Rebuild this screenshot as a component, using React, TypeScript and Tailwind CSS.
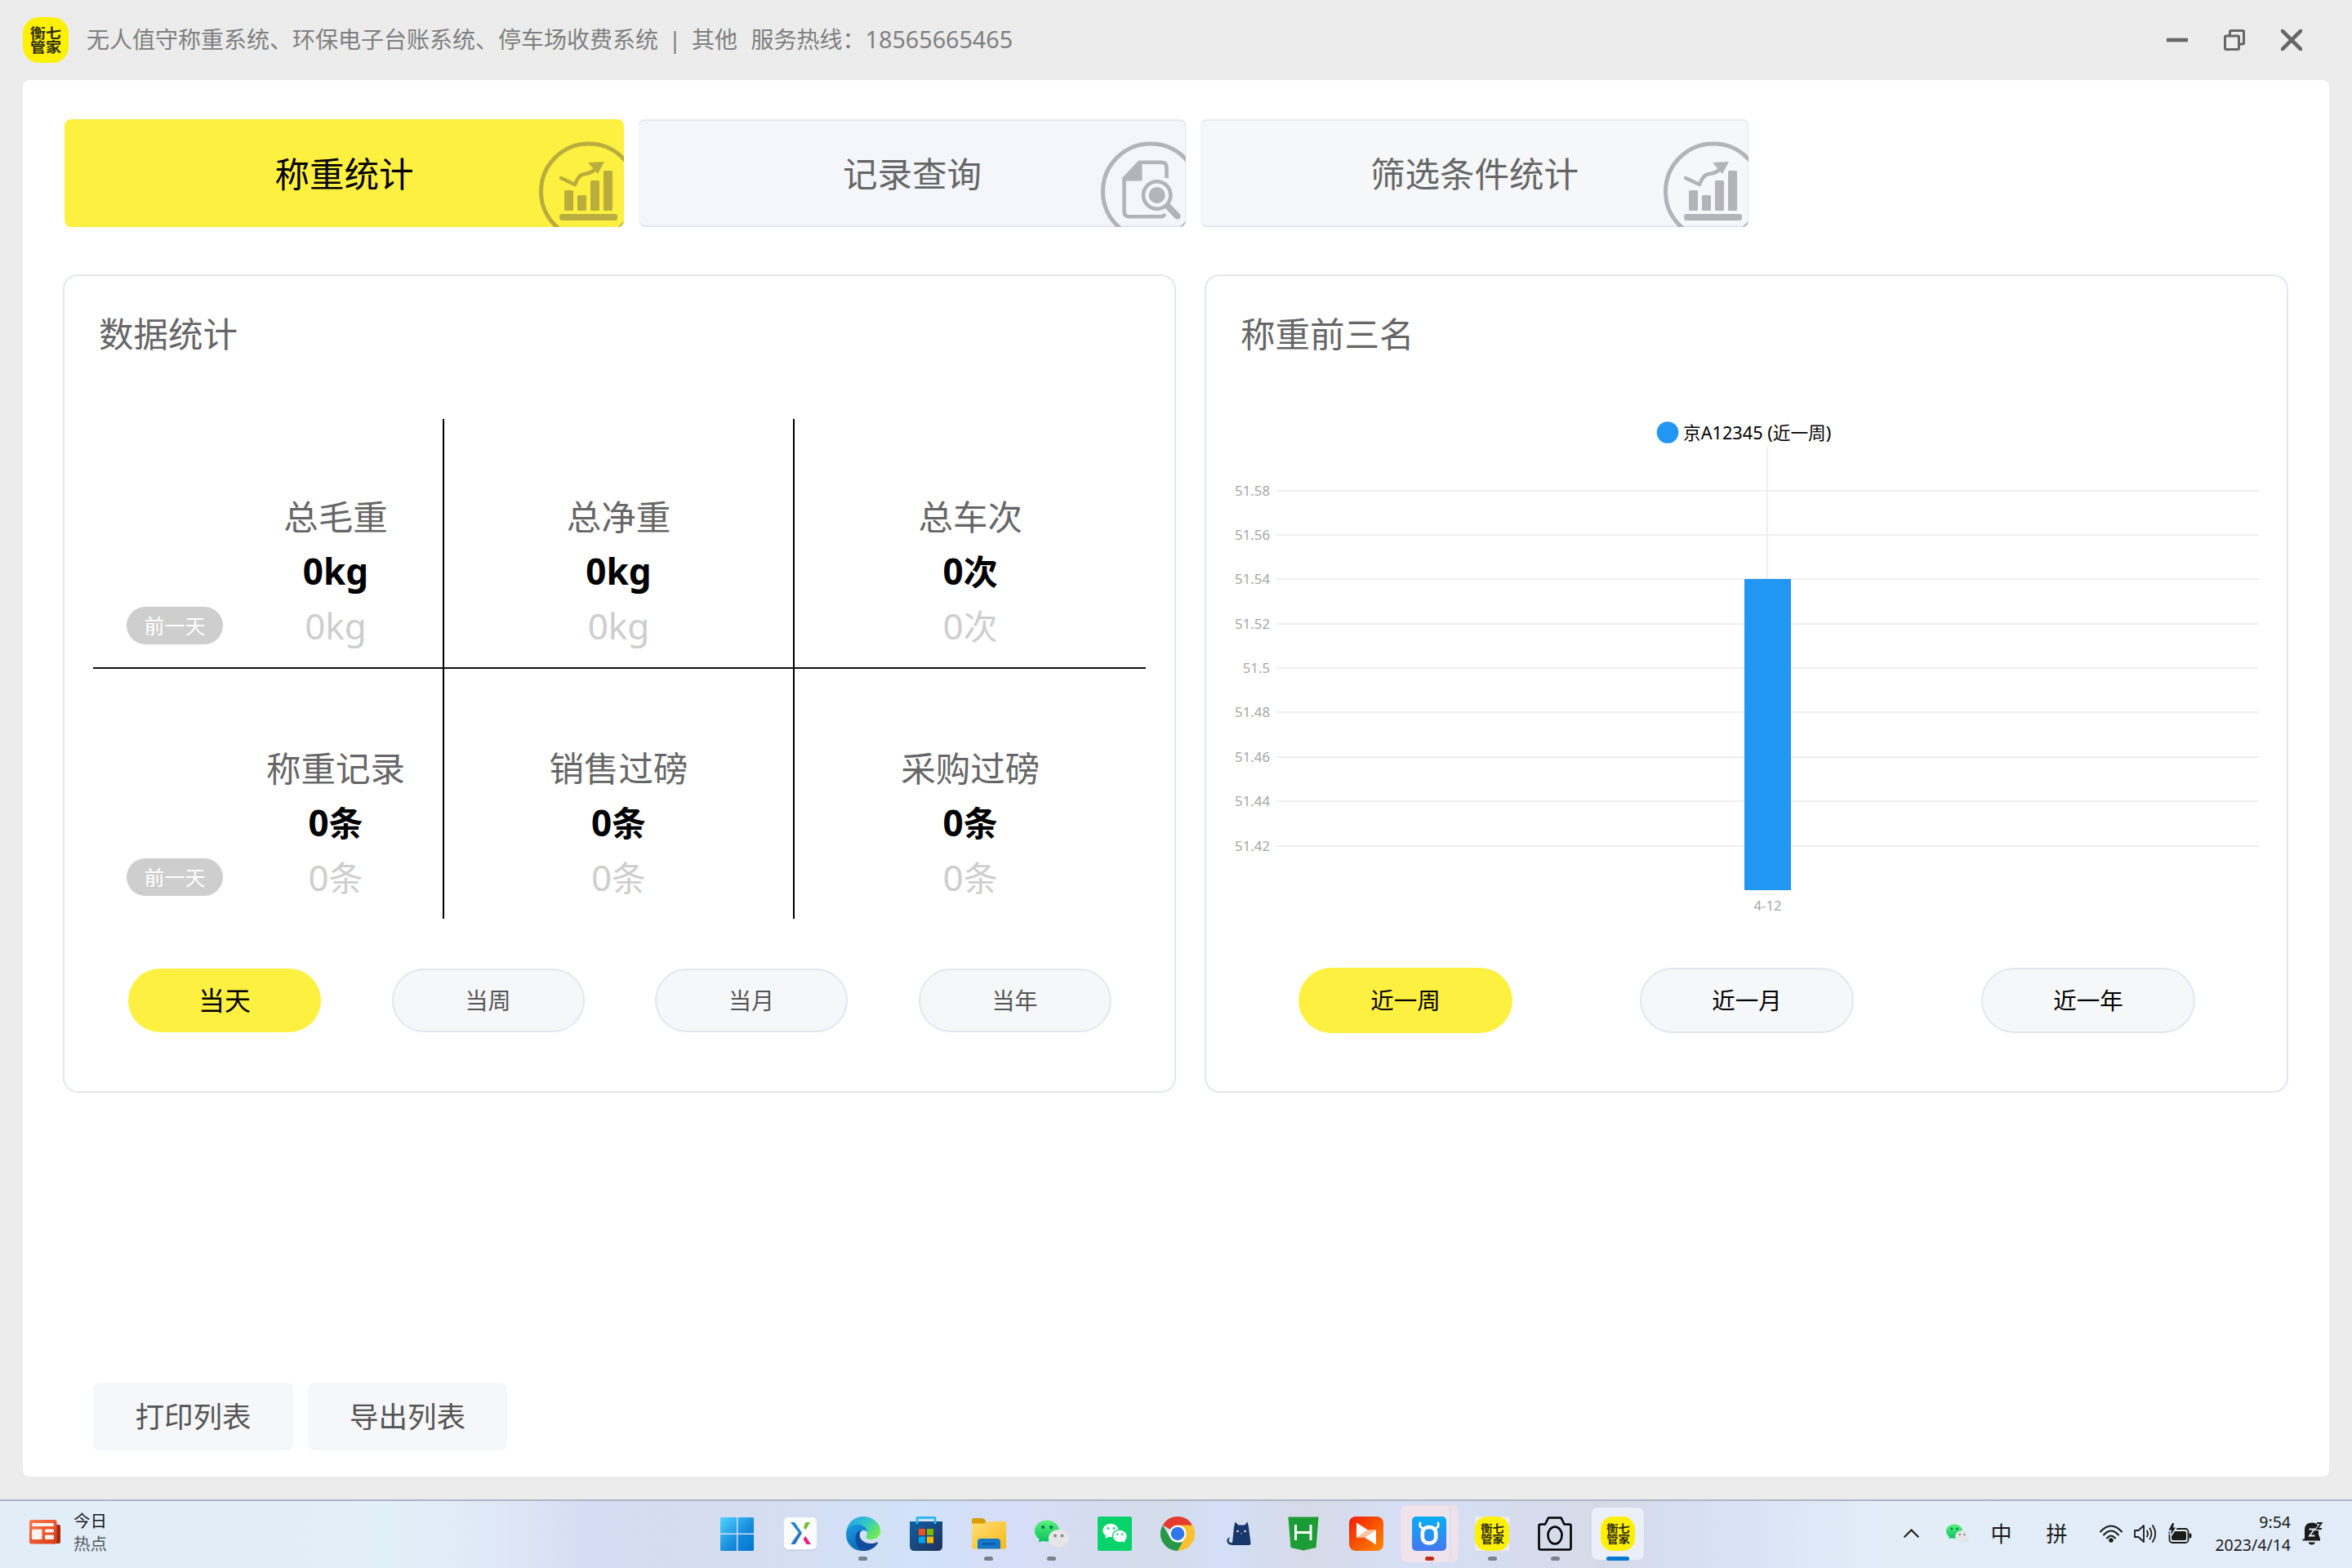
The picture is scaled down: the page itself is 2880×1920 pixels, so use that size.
import React from "react";

const FONT = "font-['Noto_Sans','Noto_Sans_CJK_SC',sans-serif]";

function ChartBadge({ color }: { color: string }) {
  return (
    <svg className="absolute right-0 bottom-0" width="104" height="106" viewBox="0 0 104 106" fill="none">
      <circle cx="61" cy="62.5" r="58.5" stroke={color} strokeWidth="5" />
      <rect x="25" y="90" width="71" height="8" rx="3" fill={color} />
      <rect x="31" y="61" width="11" height="25" rx="1.5" fill={color} />
      <rect x="47" y="67" width="11" height="19" rx="1.5" fill={color} />
      <rect x="63" y="49" width="11" height="37" rx="1.5" fill={color} />
      <rect x="79" y="37" width="11" height="49" rx="1.5" fill={color} />
      <path d="M27 46 L44 54 Q49 41 56 41 Q66 40 73 31" stroke={color} strokeWidth="4.500" strokeLinecap="round" strokeLinejoin="round" />
      <path d="M60 27 L80 26 L72 41 Z" fill={color} />
    </svg>
  );
}

function SearchBadge({ color }: { color: string }) {
  return (
    <svg className="absolute right-0 bottom-0" width="104" height="106" viewBox="0 0 104 106" fill="none">
      <circle cx="61" cy="62.5" r="58.5" stroke={color} strokeWidth="5" />
      <path d="M80.500 46 V33 Q80.500 26.700 74 26.700 H47.500 L28.500 46.500 V87 Q28.500 93.300 35 93.300 H74 Q77 93 78.500 90" stroke={color} strokeWidth="4.600" strokeLinejoin="round" />
      <path d="M28.500 48 L49 26.700 V48 Z" fill={color} stroke={color} strokeWidth="3" strokeLinejoin="round" />
      <circle cx="68.700" cy="67" r="16.700" stroke={color} strokeWidth="4.500" />
      <circle cx="68.700" cy="67" r="10" fill={color} />
      <path d="M82 80.500 L93.500 92.500" stroke={color} strokeWidth="8" strokeLinecap="round" />
    </svg>
  );
}

function Brand({ size }: { size: "lg" | "sm" }) {
  return size === "lg" ? (
    <div className="flex h-14 w-14 items-center justify-center rounded-[20px] bg-[#fff000]">
      <div className="w-[34px] scale-x-[1.15] text-center text-[16.500px] leading-[17.500px] font-bold break-all text-[#2c2a05]">
        衡七管家
      </div>
    </div>
  ) : (
    <div className="flex h-[42px] w-[42px] items-center justify-center rounded-[15px] bg-[#fff000]">
      <div className="w-[27px] scale-x-110 text-center text-[13px] leading-[13.500px] font-bold break-all text-[#2c2a05]">
        衡七管家
      </div>
    </div>
  );
}

function Stat({ label, num, unit, wide }: { label: string; num: string; unit: string; wide?: boolean }) {
  const unitSize = wide ? "text-[44px]" : "text-[42px]";
  return (
    <div className="flex flex-col items-center whitespace-nowrap">
      <div className="flex h-[67px] items-center pt-[2px] text-[42.500px] leading-none text-[#666]">{label}</div>
      <div className="flex h-[67px] items-baseline text-[44px] leading-[66px] font-bold text-black">
        <span>{num}</span>
        <span className={unitSize}>{unit}</span>
      </div>
      <div className="flex h-[68px] items-baseline text-[44px] leading-[66px] text-[#cecece]">
        <span>{num}</span>
        <span className={unitSize}>{unit}</span>
      </div>
    </div>
  );
}

function StatRow({ items, line }: { items: { label: string; unit: string }[]; line?: boolean }) {
  return (
    <div className={line ? "grid h-[306px] grid-cols-3 border-b-2 border-[#111]" : "grid h-[306px] grid-cols-3"}>
      {items.map((it, i) => (
        <div
          key={it.label}
          className={
            i === 0
              ? "flex items-end border-r-2 border-black pb-4 pl-[41px]"
              : i === 1
                ? "flex items-end justify-center border-r-2 border-black pb-4"
                : "flex items-end justify-center pb-4"
          }
        >
          {i === 0 && (
            <div className="mb-[12px] flex h-[46px] w-[118px] shrink-0 items-center justify-center rounded-full bg-[#cecece] text-[25px] leading-none text-white">
              前一天
            </div>
          )}
          <div className={i === 0 ? "ml-2 flex w-[260px] shrink-0 justify-center" : "flex"}>
            <Stat label={it.label} num="0" unit={it.unit} wide={it.unit === "kg"} />
          </div>
        </div>
      ))}
    </div>
  );
}

const ticks = ["51.58", "51.56", "51.54", "51.52", "51.5", "51.48", "51.46", "51.44", "51.42"];
const tickY = [601, 655, 709, 764, 818, 872, 927, 981, 1036];

function BarChart() {
  return (
    <svg className="block" width="1323" height="630" viewBox="1477 500 1323 630">
      <rect x="2163" y="547" width="2" height="164" fill="#efefef" />
      {ticks.map((t, i) => (
        <g key={t}>
          <rect x="1563" y={tickY[i] - 1} width="1203" height="2" fill="#efefef" />
          <text x="1555" y={tickY[i] + 6} textAnchor="end" fontSize="16.800" fill="#a6a6a6">
            {t}
          </text>
        </g>
      ))}
      <rect x="2136" y="709" width="57" height="381" fill="#2196f3" />
      <text x="2164.500" y="1114.500" textAnchor="middle" fontSize="16.800" fill="#a6a6a6">
        4-12
      </text>
      <circle cx="2042" cy="529.500" r="13.300" fill="#2196f3" />
      <text x="2061" y="538" fontSize="21.700" fill="#000">
        京A12345 (近一周)
      </text>
    </svg>
  );
}

function WeChat({ w }: { w: number }) {
  return (
    <svg width={w} height={(w * 34) / 42} viewBox="0 0 42 34">
      <defs>
        <linearGradient id="wcg" x1="0" y1="0" x2="0" y2="1">
          <stop offset="0" stopColor="#5df07e" />
          <stop offset="1" stopColor="#09c45f" />
        </linearGradient>
      </defs>
      <ellipse cx="15" cy="13.500" rx="15" ry="13" fill="url(#wcg)" />
      <path d="M6 22 L5 27.500 L13 25 Z" fill="#0fc962" />
      <circle cx="10.200" cy="9" r="2.200" fill="#128244" />
      <circle cx="20.200" cy="9" r="2.200" fill="#128244" />
      <ellipse cx="29.300" cy="22.800" rx="12.500" ry="10.700" fill="#e6e6e8" />
      <path d="M34 31 L40 33.800 L38.500 27 Z" fill="#e0e0e2" />
      <circle cx="25" cy="19.500" r="1.900" fill="#8a8a8a" />
      <circle cx="33.500" cy="19.500" r="1.900" fill="#8a8a8a" />
    </svg>
  );
}

const WindowsIcon = () => (
  <svg width="41" height="41" viewBox="0 0 41 41">
    <defs>
      <linearGradient id="win" gradientUnits="userSpaceOnUse" x1="0" y1="0" x2="41" y2="41">
        <stop offset="0" stopColor="#4fd3ff" />
        <stop offset="0.600" stopColor="#1389dc" />
        <stop offset="1" stopColor="#0076d4" />
      </linearGradient>
    </defs>
    <path fill="url(#win)" d="M1 0H20V19.500H0V1Q0 0 1 0ZM21.500 0H40Q41 0 41 1V19.500H21.500ZM0 21H20V41H1Q0 41 0 40ZM21.500 21H41V40Q41 41 40 41H21.500Z" />
  </svg>
);

const XIcon = () => (
  <svg width="42" height="42" viewBox="0 0 42 42">
    <rect x="1" y="1.500" width="40" height="40" rx="5" fill="#b9c0cf" />
    <rect x="1" y="1" width="40" height="39.500" rx="5" fill="#fbfcfd" />
    <path d="M9 7H14L23 20L14.500 34H9.500L19 20Z" fill="#1f86cf" />
    <path d="M12 29L9.500 34H14.500L23 20H19Z" fill="#2f62ae" opacity=".5" />
    <path d="M27.500 7H33L27.500 16.500L25 13Z" fill="#76bd3e" />
    <path d="M27.500 24L34 34H28.500L24.500 27.500Z" fill="#ed1f83" />
  </svg>
);

const EdgeIcon = () => (
  <svg width="42" height="42" viewBox="0 0 42 42">
    <defs>
      <linearGradient id="e1" x1="0" y1="0" x2="1" y2="0.600">
        <stop offset="0.150" stopColor="#2aa9e4" />
        <stop offset="0.550" stopColor="#2fc6cb" />
        <stop offset="1" stopColor="#6fec50" />
      </linearGradient>
      <linearGradient id="e2" x1="0" y1="0" x2="0.600" y2="1">
        <stop offset="0" stopColor="#1b9de2" />
        <stop offset="1" stopColor="#0a63b8" />
      </linearGradient>
    </defs>
    <path d="M0.500 18C2 7 10.500 0 21 0C33 0 42 8.500 42 17.500C42 24 37 28 31 28C26.500 28 24 26.500 24.500 25C26 22.500 26.500 19 24 16C20 10 6 8.500 0.500 18Z" fill="url(#e1)" />
    <path d="M0 20C1 13 7 9.800 13 9.800C21 9.800 26 14.500 26 19C23 15 16.500 16.500 16.500 24C16.500 32 25 37.500 32 34C27 40 22 42 19 42C8 41.500 0 33 0 22Z" fill="url(#e2)" />
    <path d="M18 16.500C8 20 10 37 20 42C28 42.500 35 39 39 32.500C39.300 31.500 38.800 31 37.800 31.500C27 36 17 30 16.500 23C16.400 20 17 18 18 16.500Z" fill="#114b9c" />
  </svg>
);

const StoreIcon = () => (
  <svg width="42" height="42" viewBox="0 0 42 42">
    <defs>
      <linearGradient id="st" x1="0" y1="0" x2="1" y2="1">
        <stop offset="0" stopColor="#0e5fa8" />
        <stop offset="1" stopColor="#232f57" />
      </linearGradient>
    </defs>
    <path d="M1 6H41V36Q41 42 35 42H7Q1 42 1 36Z" fill="url(#st)" />
    <path d="M10 9V2.500Q10 1.300 11.200 1.300H30.800Q32 1.300 32 2.500V9" fill="none" stroke="#25b6f5" strokeWidth="2.800" />
    <rect x="12" y="15" width="8" height="8" fill="#f25022" />
    <rect x="22" y="15" width="8" height="8" fill="#7fba00" />
    <rect x="12" y="24.500" width="8" height="8" fill="#00a4ef" />
    <rect x="22" y="24.500" width="8" height="8" fill="#ffb900" />
  </svg>
);

const FolderIcon = () => (
  <svg width="42" height="38" viewBox="0 0 42 38">
    <defs>
      <linearGradient id="fd" x1="0" y1="0" x2="1" y2="1">
        <stop offset="0" stopColor="#ffdf7e" />
        <stop offset="1" stopColor="#fbb80f" />
      </linearGradient>
    </defs>
    <path d="M0 2Q0 0 2 0H13Q15 0 17 3.500V8H0Z" fill="#dc9c05" />
    <path d="M0 6.500H15L19 4H40.500Q42 4 42 5.500V36Q42 37.500 40.500 37.500H1.500Q0 37.500 0 36Z" fill="url(#fd)" />
    <path d="M7 37.500V29Q7 25 11 25H31Q35 25 35 29V37.500Z" fill="#1377cc" />
    <rect x="12.500" y="30.500" width="17" height="2" rx="1" fill="#0b559b" />
  </svg>
);

const GreenChatIcon = () => (
  <svg width="42" height="42" viewBox="0 0 42 42">
    <rect width="42" height="42" rx="2" fill="#07d36a" />
    <ellipse cx="16" cy="17" rx="9.700" ry="8.300" fill="#fff" />
    <path d="M10 23L9.500 27L14 24.500Z" fill="#fff" />
    <circle cx="13" cy="14.500" r="1.400" fill="#07d36a" />
    <circle cx="20" cy="14.500" r="1.400" fill="#07d36a" />
    <ellipse cx="27.300" cy="24" rx="9" ry="7.800" fill="#fff" stroke="#07d36a" strokeWidth="1.200" />
    <path d="M30 30L33.500 32L33 27.500Z" fill="#fff" />
    <circle cx="24.300" cy="21.700" r="1.200" fill="#07d36a" />
    <circle cx="30" cy="21.700" r="1.200" fill="#07d36a" />
  </svg>
);

const ChromeIcon = () => (
  <svg width="42" height="42" viewBox="0 0 42 42">
    <path d="M21 21L2.800 10.500A21 21 0 0 1 39.200 10.500Z" fill="#e33b2e" />
    <path d="M21 10.500H39.200A21 21 0 0 1 21 42L30 26Z" fill="#fdc02f" />
    <path d="M2.800 10.500L12 26.200L21 31.500H27L21 42A21 21 0 0 1 2.800 10.500Z" fill="#279847" />
    <circle cx="21" cy="21" r="10.500" fill="#fff" />
    <circle cx="21" cy="21" r="8.300" fill="#2f78ec" />
  </svg>
);

const CatIcon = () => (
  <svg width="42" height="30" viewBox="0 0 42 30">
    <path d="M13 7L14.500 0.500L18.500 4.500H26L29.500 0.500L31 7L33.500 27Q33.500 29 31 29H11Q5 28.500 4.500 24.500Q4 20 8.500 19.500Q6 22 7 24.500Q8 26.500 11 26Z" fill="#17366b" />
    <circle cx="17.500" cy="12" r="1.200" fill="#fff" />
    <circle cx="26.500" cy="12" r="1.200" fill="#fff" />
    <path d="M21 14.500H23" stroke="#e8a05a" strokeWidth="1.200" />
  </svg>
);

const HIcon = () => (
  <svg width="38" height="42" viewBox="0 0 38 42">
    <path d="M0.500 0.500H37.500L34.500 38L19 41.500L3.500 38Z" fill="#1b9c35" />
    <path d="M9.500 10V29M28 10V29M9.500 19.500H28" stroke="#fff" strokeWidth="3" fill="none" />
  </svg>
);

const OrangeIcon = () => (
  <svg width="42" height="42" viewBox="0 0 42 42">
    <defs>
      <linearGradient id="or" x1="0" y1="0" x2="1" y2="1">
        <stop offset="0" stopColor="#f21d05" />
        <stop offset="1" stopColor="#ff8a00" />
      </linearGradient>
    </defs>
    <rect width="42" height="42" rx="8" fill="url(#or)" />
    <path d="M9 7.500L23 16.500L9 26Z" fill="#fff" />
    <path d="M33 16V34.500L19 25.500Z" fill="#fff" />
    <path d="M9 26L23 16.500L33 16L19 25.500Z" fill="#ffc2a2" />
  </svg>
);

const BullIcon = () => (
  <svg width="42" height="42" viewBox="0 0 42 42">
    <defs>
      <linearGradient id="bu" x1="0" y1="0" x2="0" y2="1">
        <stop offset="0" stopColor="#09adf2" />
        <stop offset="1" stopColor="#4478f0" />
      </linearGradient>
    </defs>
    <rect width="42" height="42" rx="5" fill="url(#bu)" />
    <path d="M10 8Q8.500 14 14 14.500M32 8Q33.500 14 28 14.500" stroke="#fff" strokeWidth="2.800" fill="none" strokeLinecap="round" />
    <rect x="12.800" y="13" width="16.400" height="19.500" rx="7" stroke="#fff" strokeWidth="4.600" fill="none" />
  </svg>
);

const CameraIcon = () => (
  <svg width="42" height="42" viewBox="0 0 42 42" fill="none" stroke="#000" strokeWidth="2.600">
    <path d="M3.500 9.500H9L13 1.500H28.500L32.500 9.500H38.500Q40.500 9.500 40.500 11.500V38.500Q40.500 40.500 38.500 40.500H3.500Q1.500 40.500 1.500 38.500V11.500Q1.500 9.500 3.500 9.500Z" strokeLinejoin="round" />
    <ellipse cx="21" cy="23" rx="8.500" ry="10.500" />
  </svg>
);

type Mark = "none" | "gray" | "red" | "blue";
const markClass: Record<Mark, string> = {
  none: "h-[5px] w-[11px]",
  gray: "h-[5px] w-[11px] rounded-full bg-[#7b818c]",
  red: "h-[5px] w-[11px] rounded-full bg-[#c42b1c]",
  blue: "h-[5px] w-7 rounded-full bg-[#0078d4]",
};

function Slot({ mark = "none", children, box }: { mark?: Mark; children: React.ReactNode; box?: "active" | "alert" }) {
  return (
    <div className="relative flex h-[82px] w-[77.070px] flex-col items-center pt-[19px]">
      {box === "active" && (
        <div className="absolute top-[7px] left-[5px] h-[66px] w-[66px] rounded-lg border border-[#d3d8e4] bg-[#ebeff9]" />
      )}
      {box === "alert" && (
        <>
          <div className="absolute top-[5px] left-[14px] h-[70px] w-[60px] rounded-lg bg-[#efe1ea]" />
          <div className="absolute top-[5px] left-[3px] h-[70px] w-[62px] rounded-lg border-r-2 border-[#d8dff2] bg-[#f0e3eb]" />
        </>
      )}
      <div className="relative flex h-[42px] items-center justify-center">{children}</div>
      <div className={"relative mt-[7px] " + markClass[mark]} />
    </div>
  );
}

function Taskbar() {
  return (
    <div className="flex h-[84px] items-start border-t-2 border-[#adb6c4] bg-[linear-gradient(90deg,#e2edf7_0px,#e1eff8_480px,#e0e9f7_600px,#d6dcf3_720px,#d5ddf0_900px,#d2e2f8_1130px,#d6ddf6_1250px,#d5dcec_1420px,#d3dff6_1500px,#d6dae8_1600px,#d5dff6_1730px,#d6dae8_1960px,#d7dff5_2080px,#e2edf8_2300px,#e1ecf8_2880px)]">
      <div className="flex w-[864px] items-center gap-4 pt-[10px] pl-9">
        <svg width="38" height="30" viewBox="0 0 38 30">
          <rect x="28" y="6" width="10" height="23" rx="2" fill="#a32b12" />
          <defs>
            <linearGradient id="nw" x1="0" y1="0" x2="1" y2="1">
              <stop offset="0" stopColor="#fb7a50" />
              <stop offset="1" stopColor="#d93a14" />
            </linearGradient>
          </defs>
          <rect width="33.500" height="29.500" rx="2.500" fill="url(#nw)" />
          <rect x="3" y="4" width="27" height="4" rx="1.500" fill="#fff1ec" />
          <rect x="3" y="11.500" width="12.500" height="12.500" rx="1.500" fill="#fff1ec" />
          <rect x="19" y="11.500" width="11" height="4" rx="1.500" fill="#fff1ec" />
          <rect x="19" y="18.500" width="11" height="5.500" rx="1.500" fill="#fff1ec" />
        </svg>
        <div className="flex flex-col text-[20.500px] leading-7">
          <span className="text-[#15181b]">今日</span>
          <span className="text-[#555b63]">热点</span>
        </div>
      </div>
      <div className="flex">
        <Slot><WindowsIcon /></Slot>
        <Slot><XIcon /></Slot>
        <Slot mark="gray"><EdgeIcon /></Slot>
        <Slot><StoreIcon /></Slot>
        <Slot mark="gray"><FolderIcon /></Slot>
        <Slot mark="gray"><WeChat w={42} /></Slot>
        <Slot><GreenChatIcon /></Slot>
        <Slot><ChromeIcon /></Slot>
        <Slot><CatIcon /></Slot>
        <Slot><HIcon /></Slot>
        <Slot><OrangeIcon /></Slot>
        <Slot mark="red" box="alert"><BullIcon /></Slot>
        <Slot mark="gray"><div className="bg-[#ececec]"><Brand size="sm" /></div></Slot>
        <Slot mark="gray"><CameraIcon /></Slot>
        <Slot mark="blue" box="active"><Brand size="sm" /></Slot>
      </div>
      <div className="ml-auto flex h-[79px] items-center pr-[35px] text-[#1b1b1b]">
        <svg width="19" height="11" viewBox="0 0 19 11" fill="none" stroke="#1b1b1b" strokeWidth="2" strokeLinecap="round">
          <path d="M1.200 9.800L9.500 1.500L17.800 9.800" />
        </svg>
        <div className="ml-[33px]"><WeChat w={28} /></div>
        <span className="ml-[26px] text-[26px] leading-none">中</span>
        <span className="ml-[42px] text-[26px] leading-none">拼</span>
        <svg className="ml-[40px]" width="28" height="24" viewBox="0 0 28 24" fill="none" stroke="#1b1b1b" strokeWidth="2" strokeLinecap="round">
          <path d="M1 9.500Q14 -4.500 27 9.500M5 13.500Q14 3.500 23 13.500M9 17.500Q14 11.500 19 17.500" />
          <circle cx="14" cy="20" r="1.700" fill="#1b1b1b" />
        </svg>
        <svg className="ml-[14px]" width="29" height="26" viewBox="0 0 29 26" fill="none" stroke="#1b1b1b" strokeWidth="1.800" strokeLinecap="round" strokeLinejoin="round">
          <path d="M1 9H5.500L12 3V23L5.500 17H1Z" />
          <path d="M16 9.500Q18 13 16 16.500M19.500 6.500Q23.500 13 19.500 19.500M23 3Q29.500 13 23 23" />
        </svg>
        <svg className="ml-[13px]" width="29" height="26" viewBox="0 0 29 26">
          <rect x="1.500" y="7" width="23" height="17" rx="3.500" fill="none" stroke="#1b1b1b" strokeWidth="1.800" />
          <path d="M6 10H20Q22 10 22 12V19Q22 21 20 21H6Q4 21 4 19V16Z" fill="#1b1b1b" />
          <path d="M25.500 12.500H27Q28.500 12.500 28.500 15.500Q28.500 18.500 27 18.500H25.500Z" fill="#1b1b1b" />
          <path d="M5 0H7L6 5.500H9L3 14.500L4 8.500H0.500Z" fill="#1b1b1b" stroke="#e2edf8" strokeWidth="3.500" paintOrder="stroke" />
        </svg>
        <div className="ml-7 flex flex-col items-end text-[19.500px] leading-7">
          <span>9:54</span>
          <span>2023/4/14</span>
        </div>
        <svg className="ml-[14px]" width="26" height="30" viewBox="0 0 26 30">
          <path d="M3 21V10.500Q3 1.500 12 1.500Q17 1.500 20 5V16L22 21V23.500H0.500V22Z" fill="#1b1b1b" />
          <path d="M7.500 25.500H16Q15 28.500 11.800 28.500Q8.500 28.500 7.500 25.500Z" fill="#1b1b1b" />
          <path d="M8.500 9.500H15L9 17.500H15.500" fill="none" stroke="#e2edf8" strokeWidth="1.800" />
          <path d="M18 2H23.500L18.500 9H24" fill="none" stroke="#e2edf8" strokeWidth="4" />
          <path d="M18 2H23.500L18.500 9H24" fill="none" stroke="#1b1b1b" strokeWidth="2" />
        </svg>
      </div>
    </div>
  );
}

export default function App() {
  return (
    <div className={"flex h-[1920px] w-[2880px] flex-col overflow-hidden bg-[#ececec] " + FONT}>
      <header className="flex h-[98px] items-center pr-[61px] pl-7">
        <Brand size="lg" />
        <p className="mb-[2px] ml-[22px] text-[28px] leading-none whitespace-pre text-[#808080]">
          无人值守称重系统、环保电子台账系统、停车场收费系统 <span className="mx-[5.500px]">|</span> 其他  <span className="ml-[2px]">服务热线：</span><span className="text-[28.700px]">18565665465</span>
        </p>
        <div className="ml-auto flex items-center gap-11">
          <svg width="26" height="26" viewBox="0 0 26 26"><rect y="10.700" width="26" height="4.600" fill="#666" /></svg>
          <svg width="26" height="26" viewBox="0 0 26 26" fill="none" stroke="#666" strokeWidth="3">
            <path d="M7.500 7V3Q7.500 1.500 9 1.500H23Q24.500 1.500 24.500 3V16.500Q24.500 18 23 18H19" />
            <rect x="1.500" y="8" width="17" height="16.500" rx="1.500" />
          </svg>
          <svg width="26" height="26" viewBox="0 0 26 26" stroke="#666" strokeWidth="4.600"><path d="M0 0L26 26M26 0L0 26" /></svg>
        </div>
      </header>

      <main className="mx-7 mb-7 flex h-[1710px] flex-col rounded-lg bg-white px-[49px] pt-12">
        <nav className="flex h-[132px] gap-[18px] pl-[2px]">
          <div className="relative flex w-[685px] items-center justify-center overflow-hidden rounded-lg bg-[#fef040] pt-[2px] text-[42.500px] leading-none text-black">
            称重统计
            <ChartBadge color="#b9ae3d" />
          </div>
          <div className="relative flex w-[670px] items-center justify-center overflow-hidden rounded-lg bg-[#f4f6fb] pt-[2px] text-[42.500px] leading-none text-[#666] shadow-[inset_-1px_0_0_#e2e6ee,inset_0_2px_0_#e5e9f0,inset_0_-2px_0_#e2e6ee]">
            记录查询
            <SearchBadge color="#b3b3b9" />
          </div>
          <div className="relative flex w-[671px] items-center justify-center overflow-hidden rounded-lg bg-[#f6f7f9] pt-[2px] text-[42.500px] leading-none text-[#666] shadow-[inset_-1px_0_0_#e2e6ee,inset_0_2px_0_#e5e9f0,inset_0_-2px_0_#e2e6ee]">
            筛选条件统计
            <ChartBadge color="#b3b3b9" />
          </div>
        </nav>

        <div className="mt-[58px] flex h-[1002px] gap-[35px]">
          <section className="flex w-[1363px] flex-col rounded-[18px] border-2 border-[#e3e7ed]">
            <h2 className="mt-[50px] ml-[42px] text-[42.500px] leading-[42px] text-[#666]">数据统计</h2>
            <div className="mt-[83px] ml-[35px] w-[1289px]">
              <StatRow line items={[{ label: "总毛重", unit: "kg" }, { label: "总净重", unit: "kg" }, { label: "总车次", unit: "次" }]} />
              <StatRow items={[{ label: "称重记录", unit: "条" }, { label: "销售过磅", unit: "条" }, { label: "采购过磅", unit: "条" }]} />
            </div>
            <div className="mt-[61px] flex gap-[86.500px] pl-[78px] text-[28px] leading-none text-[#555]">
              <div className="flex h-[78px] w-[236px] items-center justify-center rounded-full bg-[#fef040] text-[32px] text-black">当天</div>
              <div className="flex h-[78px] w-[236px] items-center justify-center rounded-full border-2 border-[#e3e7ed] bg-[#f6f7f9]">当周</div>
              <div className="flex h-[78px] w-[236px] items-center justify-center rounded-full border-2 border-[#e3e7ed] bg-[#f6f7f9]">当月</div>
              <div className="flex h-[78px] w-[236px] items-center justify-center rounded-full border-2 border-[#e3e7ed] bg-[#f6f7f9]">当年</div>
            </div>
          </section>

          <section className="flex w-[1327px] flex-col rounded-[18px] border-2 border-[#e3e7ed]">
            <h2 className="mt-[50px] ml-[42px] text-[42.500px] leading-[42px] text-[#666]">称重前三名</h2>
            <div className="mt-[70px]">
              <BarChart />
            </div>
            <div className="mt-[55px] flex gap-[156px] pl-[113px] text-[28.500px] leading-none text-black">
              <div className="flex h-20 w-[262px] items-center justify-center rounded-full bg-[#fef040]">近一周</div>
              <div className="flex h-20 w-[262px] items-center justify-center rounded-full border-2 border-[#e3e7ed] bg-[#f6f7f9]">近一月</div>
              <div className="flex h-20 w-[262px] items-center justify-center rounded-full border-2 border-[#e3e7ed] bg-[#f6f7f9]">近一年</div>
            </div>
          </section>
        </div>

        <div className="mt-[355px] flex gap-[18px] pl-[37px] text-[35.500px] leading-none text-[#555]">
          <div className="flex h-[83px] w-[245px] items-center justify-center rounded-lg bg-[#f6f7f9]">打印列表</div>
          <div className="flex h-[83px] w-[244px] items-center justify-center rounded-lg bg-[#f6f7f9]">导出列表</div>
        </div>
      </main>

      <Taskbar />
    </div>
  );
}
